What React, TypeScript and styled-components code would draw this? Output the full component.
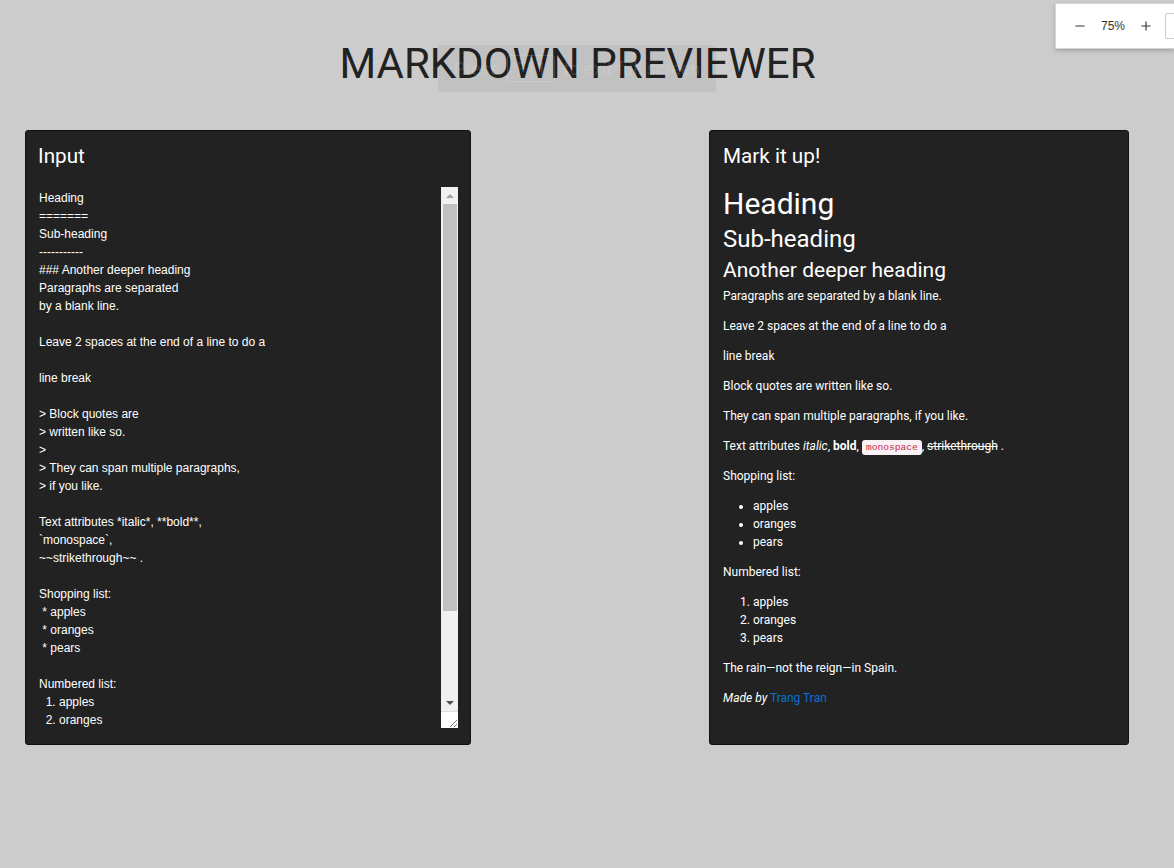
import styled, { createGlobalStyle } from "styled-components";
import { Minus, Plus } from "lucide-react";

const GlobalStyle = createGlobalStyle`
  body {
    margin: 0;
    background: #cccccc;
    font-family: Roboto, "Liberation Sans", sans-serif;
    overflow-x: hidden;
  }
`;

const markdown = `Heading
=======
Sub-heading
-----------
### Another deeper heading
Paragraphs are separated
by a blank line.

Leave 2 spaces at the end of a line to do a

line break

> Block quotes are
> written like so.
>
> They can span multiple paragraphs,
> if you like.

Text attributes *italic*, **bold**,
\`monospace\`,
~~strikethrough~~ .

Shopping list:
 * apples
 * oranges
 * pears

Numbered list:
  1. apples
  2. oranges
  3. pears

The rain---not the reign---in Spain.

*Made by [Trang Tran](https://github.com)*`;

const Page = styled.div`
  width: 1155px;
  position: relative;
`;

const Title = styled.h1`
  margin: 0;
  padding-top: 36px;
  height: 130px;
  box-sizing: border-box;
  text-align: center;
  font-family: Roboto, sans-serif;
  font-weight: 400;
  font-size: 42px;
  line-height: 56px;
  color: #222;
`;

const Columns = styled.div`
  display: flex;
  justify-content: space-between;
  align-items: stretch;
  padding: 0 26px 0 25px;
`;

const Panel = styled.section<{ $width: number }>`
  width: ${(p) => p.$width}px;
  height: 615px;
  box-sizing: border-box;
  background: #222;
  border: 1px solid #111;
  border-radius: 3px;
  color: #fff;
  display: flex;
  flex-direction: column;
`;

const InputPanel = styled(Panel)`
  padding: 12px 12px 16px 12px;
`;

const PreviewPanel = styled(Panel)`
  padding: 12px 13px 16px 13px;
`;

const PanelTitle = styled.h2`
  margin: 0;
  font-family: Roboto, sans-serif;
  font-weight: 400;
  font-size: 20.7px;
  line-height: 26px;
  color: #fff;
`;

const Editor = styled.div`
  margin-top: 18px;
  flex: 1;
  display: flex;
  min-height: 0;
`;

const TextArea = styled.textarea`
  flex: 1;
  background: transparent;
  border: none;
  outline: none;
  resize: none;
  overflow: hidden;
  color: #fff;
  font-family: "Liberation Sans", Arial, sans-serif;
  font-size: 12px;
  line-height: 18px;
  padding: 2px 1px 0;
  margin: 0;
  white-space: pre;
`;

const ScrollBar = styled.div`
  width: 17px;
  display: flex;
  flex-direction: column;
  background: #f1f1f1;
`;

const ArrowButton = styled.div<{ $dir: "up" | "down"; $color: string }>`
  height: 17px;
  display: flex;
  align-items: center;
  justify-content: center;
  &::before {
    content: "";
    width: 0;
    height: 0;
    border-left: 4px solid transparent;
    border-right: 4px solid transparent;
    ${(p) =>
      p.$dir === "up"
        ? `border-bottom: 4px solid ${p.$color};`
        : `border-top: 4px solid ${p.$color};`}
  }
`;

const Track = styled.div`
  flex: 1;
  padding: 0 1px 0 2px;
  display: flex;
  flex-direction: column;
`;

const Thumb = styled.div`
  height: 407px;
  background: #c1c1c1;
`;

const Resizer = styled.div`
  height: 17px;
  background: #fff;
  border-top: 1px solid #dcdcdc;
  box-sizing: border-box;
  display: flex;
  align-items: flex-end;
  justify-content: flex-end;
  svg {
    display: block;
  }
`;

const Preview = styled.div`
  margin-top: 17px;
  font-family: Roboto, sans-serif;
  font-size: 12px;
  line-height: 18px;
  color: #fff;

  h1, h2, h3 {
    margin: 0;
    font-weight: 400;
  }
  h1 {
    font-size: 30px;
    line-height: 36px;
  }
  h2 {
    font-size: 24px;
    line-height: 34px;
  }
  h3 {
    font-size: 21px;
    line-height: 28px;
    margin-bottom: 3px;
  }
  p {
    margin: 0 0 12px;
  }
  ul, ol {
    margin: 0 0 12px;
    padding-left: 30px;
  }
  code {
    font-family: "Liberation Mono", "DejaVu Sans Mono", monospace;
    font-size: 9.6px;
    line-height: 1;
    color: #c7254e;
    background: #f9f2f4;
    padding: 2px 4px;
    border-radius: 3px;
  }
  a {
    color: #0a70d6;
    text-decoration: none;
  }
`;

const ZoomPopup = styled.div`
  position: absolute;
  top: 3px;
  left: 1055px;
  width: 119px;
  height: 46px;
  box-sizing: border-box;
  overflow: hidden;
  background: #fff;
  border: 1px solid #d6d6d6;
  border-right: none;
  box-shadow: 0 2px 4px rgba(0, 0, 0, 0.2);
  display: flex;
  align-items: center;
  padding-left: 15px;
  font-family: "Liberation Sans", Arial, sans-serif;
  font-size: 12px;
  color: #333;
  > * {
    flex-shrink: 0;
  }
`;

const ZoomButton = styled.div`
  width: 18px;
  display: flex;
  justify-content: center;
  color: #333;
`;

const ZoomValue = styled.span`
  width: 48px;
  text-align: center;
`;

const ResetButton = styled.div`
  margin-left: 10px;
  width: 40px;
  height: 24px;
  border: 1px solid #ccc;
  border-radius: 2px;
`;

const Toast = styled.div`
  position: absolute;
  top: 45px;
  left: 438px;
  width: 278px;
  height: 47px;
  background: rgba(0, 0, 0, 0.05);
  border-radius: 3px;
  display: flex;
  align-items: center;
  justify-content: center;
  gap: 8px;
  font-family: Roboto, sans-serif;
  font-size: 18px;
  color: rgba(255, 255, 255, 0.15);
`;

const Key = styled.span`
  border: 1px solid rgba(255, 255, 255, 0.15);
  border-radius: 3px;
  padding: 2px 8px;
`;

export default function App() {
  return (
    <Page>
      <GlobalStyle />
      <Toast>
        Press <Key>F11</Key> to exit full screen
      </Toast>
      <Title>MARKDOWN PREVIEWER</Title>
      <Columns>
        <InputPanel $width={446}>
          <PanelTitle>Input</PanelTitle>
          <Editor>
            <TextArea defaultValue={markdown} spellCheck={false} />
            <ScrollBar>
              <ArrowButton $dir="up" $color="#a3a3a3" />
              <Track>
                <Thumb />
              </Track>
              <ArrowButton $dir="down" $color="#505050" />
              <Resizer>
                <svg width="10" height="10" viewBox="0 0 10 10">
                  <path d="M9 2 L2 9 M9 6 L6 9" stroke="#777" strokeWidth="1" />
                </svg>
              </Resizer>
            </ScrollBar>
          </Editor>
        </InputPanel>
        <PreviewPanel $width={420}>
          <PanelTitle>Mark it up!</PanelTitle>
          <Preview>
            <h1>Heading</h1>
            <h2>Sub-heading</h2>
            <h3>Another deeper heading</h3>
            <p>Paragraphs are separated by a blank line.</p>
            <p>Leave 2 spaces at the end of a line to do a</p>
            <p>line break</p>
            <p>Block quotes are written like so.</p>
            <p>They can span multiple paragraphs, if you like.</p>
            <p>
              Text attributes <em>italic</em>, <strong>bold</strong>,{" "}
              <code>monospace</code>, <del>strikethrough</del> .
            </p>
            <p>Shopping list:</p>
            <ul>
              <li>apples</li>
              <li>oranges</li>
              <li>pears</li>
            </ul>
            <p>Numbered list:</p>
            <ol>
              <li>apples</li>
              <li>oranges</li>
              <li>pears</li>
            </ol>
            <p>The rain—not the reign—in Spain.</p>
            <p>
              <em>Made by</em> <a href="#trang">Trang Tran</a>
            </p>
          </Preview>
        </PreviewPanel>
      </Columns>
      <ZoomPopup>
        <ZoomButton>
          <Minus size={14} strokeWidth={2} />
        </ZoomButton>
        <ZoomValue>75%</ZoomValue>
        <ZoomButton>
          <Plus size={14} strokeWidth={2} />
        </ZoomButton>
        <ResetButton />
      </ZoomPopup>
    </Page>
  );
}
